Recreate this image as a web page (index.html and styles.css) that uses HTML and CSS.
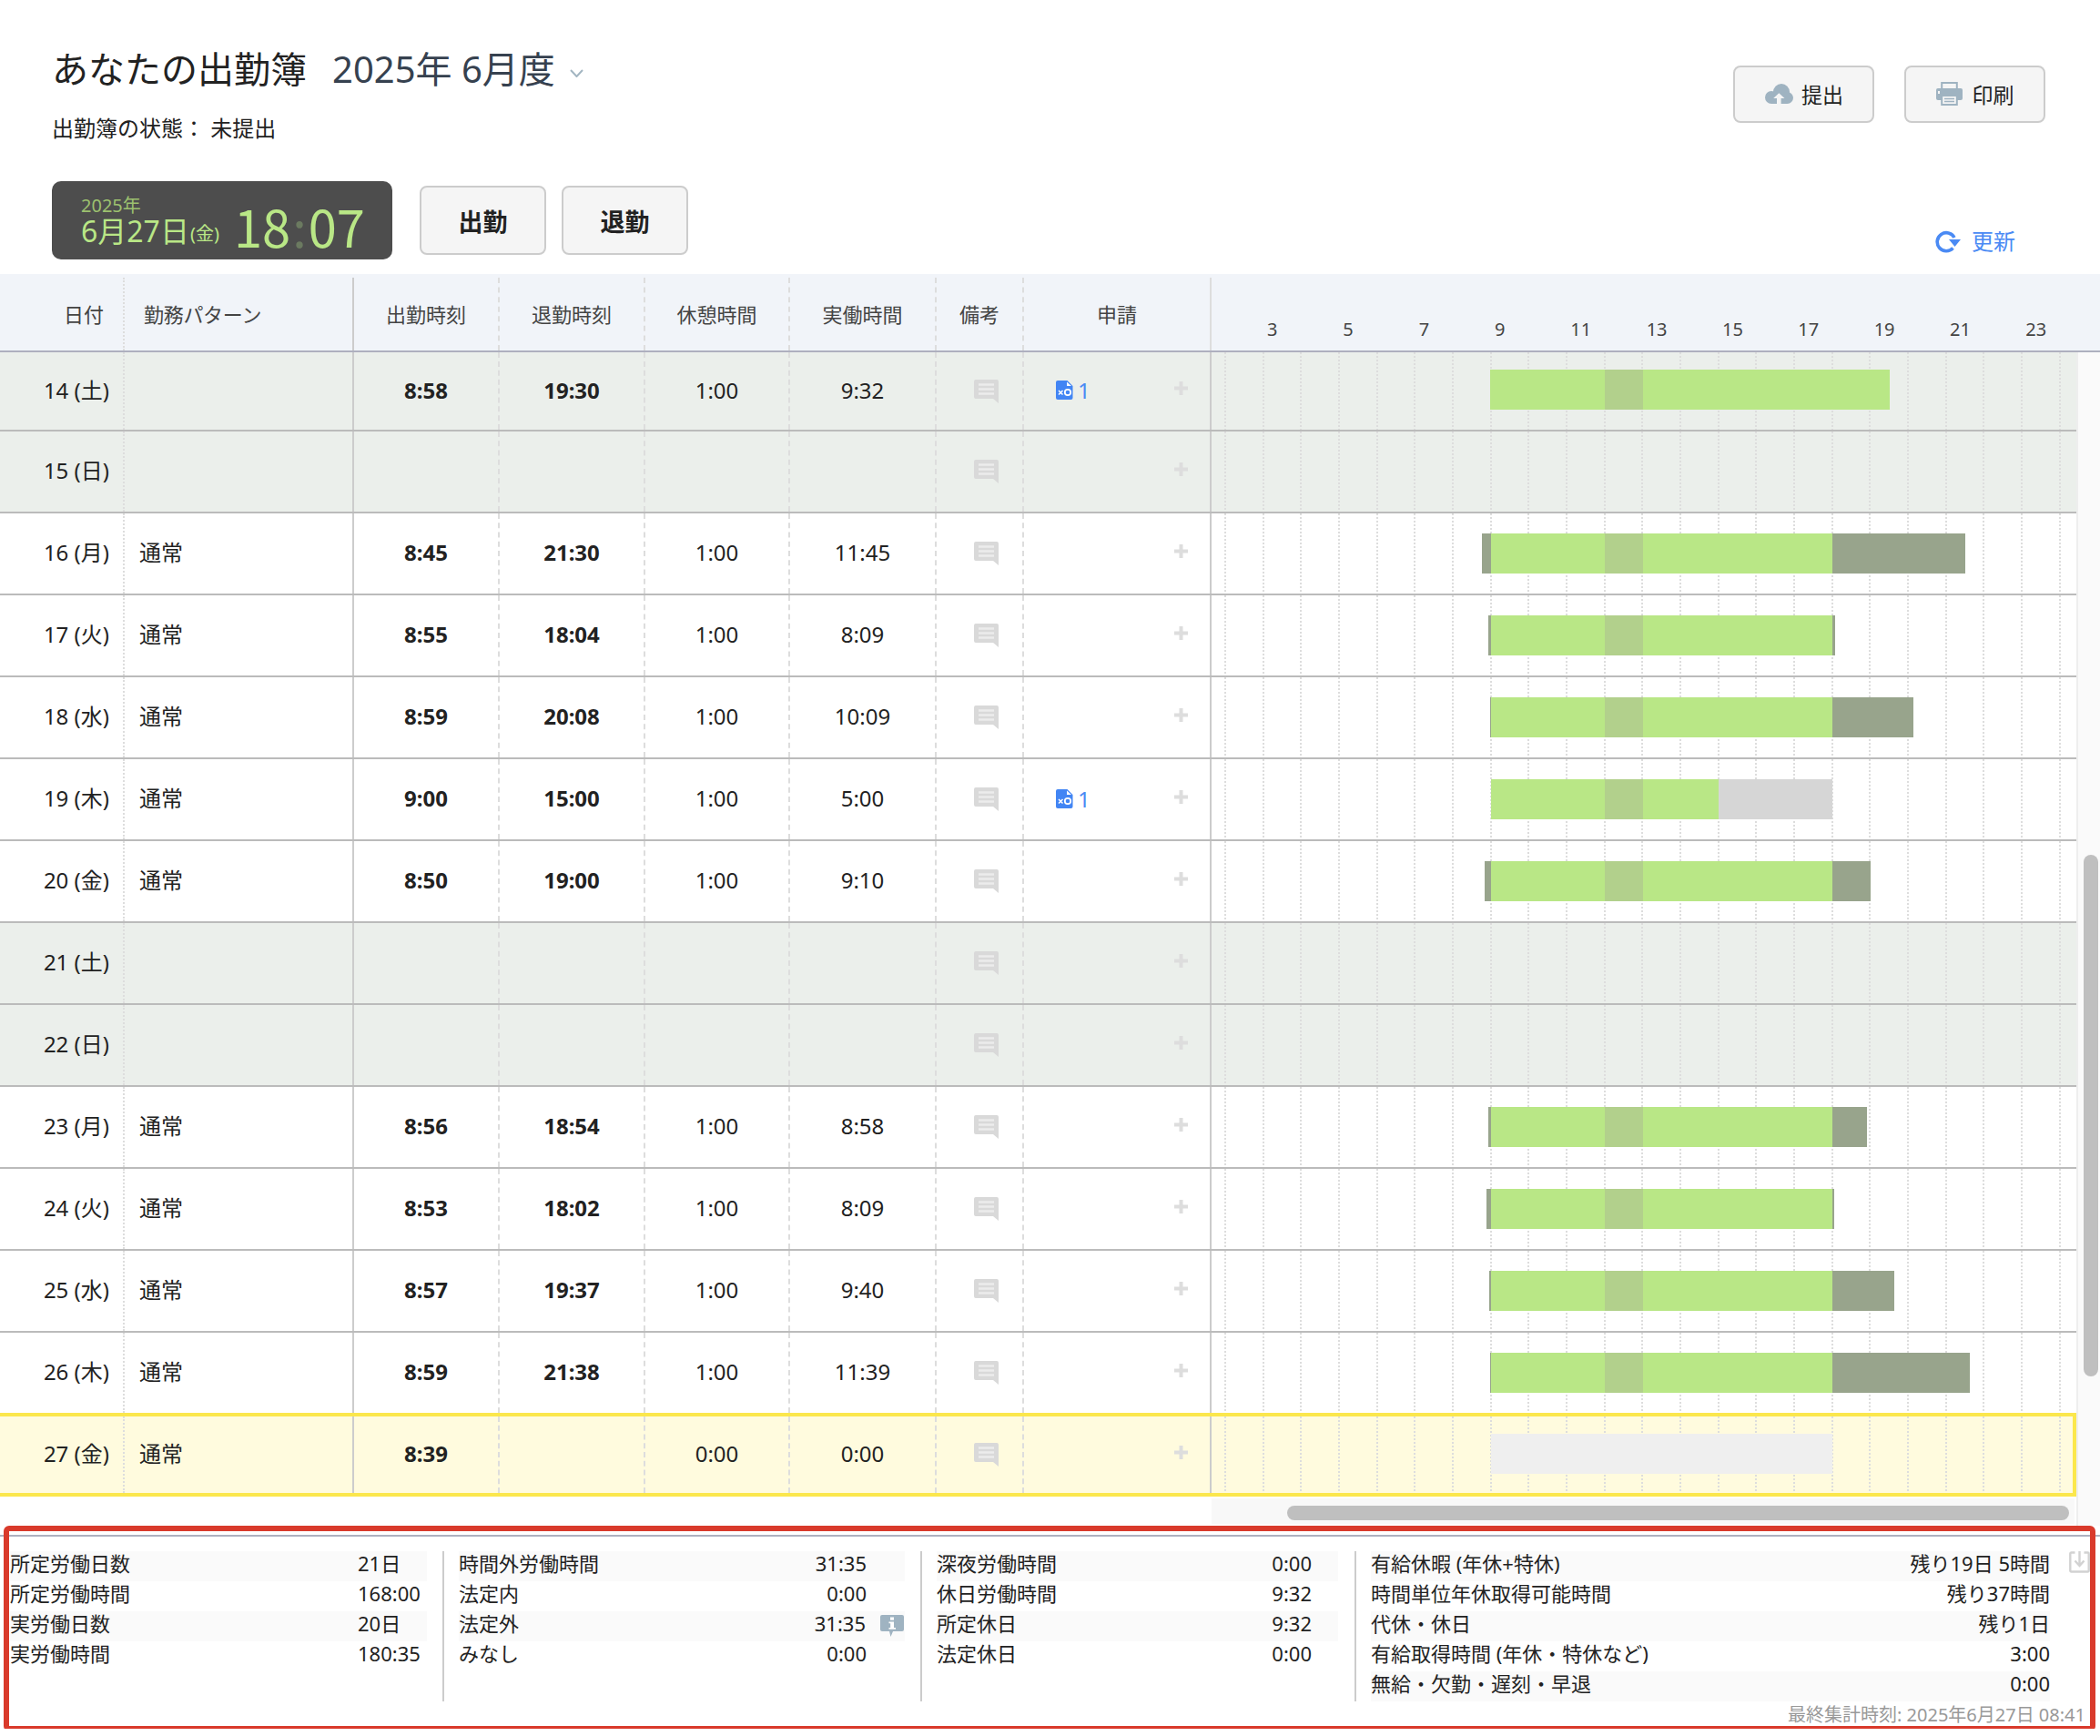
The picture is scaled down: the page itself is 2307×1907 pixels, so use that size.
FILE: index.html
```html
<!DOCTYPE html>
<html lang="ja">
<head>
    <meta charset="UTF-8">
    <title>あなたの出勤簿</title>
    <link rel="stylesheet" href="styles.css">
</head>
<body>
    <svg class="icon-defs" width="0" height="0" aria-hidden="true">
        <symbol id="iconNote" viewBox="0 0 27 26">
            <path d="M2 0H25A2 2 0 0 1 27 2V26L21 21H2A2 2 0 0 1 0 19V2A2 2 0 0 1 2 0Z" fill="#d9d9d9"/>
            <path d="M5 5.5H22M5 10.5H22M5 15.5H22" stroke="#ececec" stroke-width="2.6"/>
        </symbol>
        <symbol id="iconPlus" viewBox="0 0 17 17">
            <path d="M8.5 1V16M1 8.5H16" stroke="#dddddd" stroke-width="4"/>
        </symbol>
        <symbol id="iconFile" viewBox="0 0 19 21">
            <path d="M2 0H12.5L18.500 6V19A2 2 0 0 1 16.500 21H2A2 2 0 0 1 0 19V2A2 2 0 0 1 2 0Z" fill="#4285f4"/>
            <path d="M12 1.500L17 6H12Z" fill="#ffffff"/>
            <path d="M3 11L7.500 15.500M7.500 11L3 15.500" stroke="#ffffff" stroke-width="1.500"/>
            <circle cx="13" cy="13" r="3.200" fill="none" stroke="#ffffff" stroke-width="1.800"/>
        </symbol>
    </svg>

    <header class="page-head">
        <div class="head-top">
            <div class="head-title">
                <h1>あなたの出勤簿<span class="term">2025年 6月度</span>
                    <svg class="chevron" width="15" height="9" viewBox="0 0 15 9"><path d="M1 1L7.500 8L14 1" fill="none" stroke="#a3b6c2" stroke-width="2"/></svg>
                </h1>
                <p class="status">出勤簿の状態： 未提出</p>
            </div>
            <div class="head-actions">
                <button class="btn btn-small">
                    <svg width="32" height="22" viewBox="0 0 32 22">
                        <circle cx="8" cy="15" r="7" fill="#9fb3c1"/>
                        <circle cx="19" cy="9" r="9" fill="#9fb3c1"/>
                        <circle cx="25.500" cy="15.500" r="6.500" fill="#9fb3c1"/>
                        <rect x="8" y="13" width="17" height="9" fill="#9fb3c1"/>
                        <path d="M16.300 10.300L22.500 16H18.600V22H14V16H10.200Z" fill="#f5f5f5"/>
                    </svg>
                    提出
                </button>
                <button class="btn btn-small btn-print">
                    <svg width="29" height="26" viewBox="0 0 29 26">
                        <rect x="6.200" y="1" width="16.600" height="10" fill="none" stroke="#9fb3c1" stroke-width="2"/>
                        <rect x="0" y="7" width="29" height="13" rx="2" fill="#9fb3c1"/>
                        <rect x="2" y="10" width="2" height="3" fill="#f5f5f5"/>
                        <rect x="6.200" y="15" width="16.600" height="10" fill="#f5f5f5" stroke="#9fb3c1" stroke-width="2"/>
                        <path d="M9 18.500H20M9 21.500H20" stroke="#9fb3c1" stroke-width="1.500"/>
                    </svg>
                    印刷
                </button>
            </div>
        </div>
        <div class="head-bottom">
            <div class="clock">
                <div class="clock-date">
                    <div class="clock-year">2025年</div>
                    <div class="clock-day">6月27日<small>(金)</small></div>
                </div>
                <div class="clock-time">18<span class="clock-colon">:</span>07</div>
            </div>
            <button class="btn btn-punch">出勤</button>
            <button class="btn btn-punch">退勤</button>
            <a class="refresh">
                <svg width="28" height="25" viewBox="0 0 28 25">
                    <path d="M21 8A10 10 0 1 0 19.500 19.500" fill="none" stroke="#4a8af4" stroke-width="3.600"/>
                    <path d="M15 10H28L21.500 18Z" fill="#4a8af4"/>
                </svg>
                更新
            </a>
        </div>
    </header>

    <div class="thead grid-row">
        <div class="cell c-date">日付</div>
        <div class="cell c-pattern">勤務パターン</div>
        <div class="cell c-num">出勤時刻</div>
        <div class="cell c-num">退勤時刻</div>
        <div class="cell c-num">休憩時間</div>
        <div class="cell c-num">実働時間</div>
        <div class="cell c-center">備考</div>
        <div class="cell c-center c-last">申請</div>
        <div class="axis">
            <span>3</span><span>5</span><span>7</span><span>9</span><span>11</span><span>13</span><span>15</span><span>17</span><span>19</span><span>21</span><span>23</span>
        </div>
    </div>

    <div class="sheet">
        <div class="rows">
            <div class="grid-row row row-first off">
                <div class="cell c-date">14 (土)</div>
                <div class="cell c-pattern"></div>
                <div class="cell c-num"><b>8:58</b></div>
                <div class="cell c-num"><b>19:30</b></div>
                <div class="cell c-num">1:00</div>
                <div class="cell c-num">9:32</div>
                <div class="cell c-note"><svg width="27" height="26"><use href="#iconNote"/></svg></div>
                <div class="cell c-req c-last"><span class="req-link"><svg width="19" height="21"><use href="#iconFile"/></svg>1</span><svg class="plus" width="17" height="17"><use href="#iconPlus"/></svg></div>
                <div class="chart">
                    <div class="bar" style="margin-left:306px"><i class="work" style="width:126px"></i><i class="rest" style="width:42px"></i><i class="work" style="width:271px"></i></div>
                </div>
            </div>

            <div class="grid-row row off">
                <div class="cell c-date">15 (日)</div>
                <div class="cell c-pattern"></div>
                <div class="cell c-num"></div>
                <div class="cell c-num"></div>
                <div class="cell c-num"></div>
                <div class="cell c-num"></div>
                <div class="cell c-note"><svg width="27" height="26"><use href="#iconNote"/></svg></div>
                <div class="cell c-req c-last"><svg class="plus" width="17" height="17"><use href="#iconPlus"/></svg></div>
                <div class="chart"></div>
            </div>

            <div class="grid-row row">
                <div class="cell c-date">16 (月)</div>
                <div class="cell c-pattern">通常</div>
                <div class="cell c-num"><b>8:45</b></div>
                <div class="cell c-num"><b>21:30</b></div>
                <div class="cell c-num">1:00</div>
                <div class="cell c-num">11:45</div>
                <div class="cell c-note"><svg width="27" height="26"><use href="#iconNote"/></svg></div>
                <div class="cell c-req c-last"><svg class="plus" width="17" height="17"><use href="#iconPlus"/></svg></div>
                <div class="chart">
                    <div class="bar" style="margin-left:297px"><i class="over" style="width:10px"></i><i class="work" style="width:125px"></i><i class="rest" style="width:42px"></i><i class="work" style="width:208px"></i><i class="over" style="width:146px"></i></div>
                </div>
            </div>

            <div class="grid-row row">
                <div class="cell c-date">17 (火)</div>
                <div class="cell c-pattern">通常</div>
                <div class="cell c-num"><b>8:55</b></div>
                <div class="cell c-num"><b>18:04</b></div>
                <div class="cell c-num">1:00</div>
                <div class="cell c-num">8:09</div>
                <div class="cell c-note"><svg width="27" height="26"><use href="#iconNote"/></svg></div>
                <div class="cell c-req c-last"><svg class="plus" width="17" height="17"><use href="#iconPlus"/></svg></div>
                <div class="chart">
                    <div class="bar" style="margin-left:304px"><i class="over" style="width:3px"></i><i class="work" style="width:125px"></i><i class="rest" style="width:42px"></i><i class="work" style="width:208px"></i><i class="over" style="width:3px"></i></div>
                </div>
            </div>

            <div class="grid-row row">
                <div class="cell c-date">18 (水)</div>
                <div class="cell c-pattern">通常</div>
                <div class="cell c-num"><b>8:59</b></div>
                <div class="cell c-num"><b>20:08</b></div>
                <div class="cell c-num">1:00</div>
                <div class="cell c-num">10:09</div>
                <div class="cell c-note"><svg width="27" height="26"><use href="#iconNote"/></svg></div>
                <div class="cell c-req c-last"><svg class="plus" width="17" height="17"><use href="#iconPlus"/></svg></div>
                <div class="chart">
                    <div class="bar" style="margin-left:306px"><i class="over" style="width:1px"></i><i class="work" style="width:125px"></i><i class="rest" style="width:42px"></i><i class="work" style="width:208px"></i><i class="over" style="width:89px"></i></div>
                </div>
            </div>

            <div class="grid-row row">
                <div class="cell c-date">19 (木)</div>
                <div class="cell c-pattern">通常</div>
                <div class="cell c-num"><b>9:00</b></div>
                <div class="cell c-num"><b>15:00</b></div>
                <div class="cell c-num">1:00</div>
                <div class="cell c-num">5:00</div>
                <div class="cell c-note"><svg width="27" height="26"><use href="#iconNote"/></svg></div>
                <div class="cell c-req c-last"><span class="req-link"><svg width="19" height="21"><use href="#iconFile"/></svg>1</span><svg class="plus" width="17" height="17"><use href="#iconPlus"/></svg></div>
                <div class="chart">
                    <div class="bar" style="margin-left:307px"><i class="work" style="width:125px"></i><i class="rest" style="width:42px"></i><i class="work" style="width:83px"></i><i class="short" style="width:125px"></i></div>
                </div>
            </div>

            <div class="grid-row row">
                <div class="cell c-date">20 (金)</div>
                <div class="cell c-pattern">通常</div>
                <div class="cell c-num"><b>8:50</b></div>
                <div class="cell c-num"><b>19:00</b></div>
                <div class="cell c-num">1:00</div>
                <div class="cell c-num">9:10</div>
                <div class="cell c-note"><svg width="27" height="26"><use href="#iconNote"/></svg></div>
                <div class="cell c-req c-last"><svg class="plus" width="17" height="17"><use href="#iconPlus"/></svg></div>
                <div class="chart">
                    <div class="bar" style="margin-left:300px"><i class="over" style="width:7px"></i><i class="work" style="width:125px"></i><i class="rest" style="width:42px"></i><i class="work" style="width:208px"></i><i class="over" style="width:42px"></i></div>
                </div>
            </div>

            <div class="grid-row row off">
                <div class="cell c-date">21 (土)</div>
                <div class="cell c-pattern"></div>
                <div class="cell c-num"></div>
                <div class="cell c-num"></div>
                <div class="cell c-num"></div>
                <div class="cell c-num"></div>
                <div class="cell c-note"><svg width="27" height="26"><use href="#iconNote"/></svg></div>
                <div class="cell c-req c-last"><svg class="plus" width="17" height="17"><use href="#iconPlus"/></svg></div>
                <div class="chart"></div>
            </div>

            <div class="grid-row row off">
                <div class="cell c-date">22 (日)</div>
                <div class="cell c-pattern"></div>
                <div class="cell c-num"></div>
                <div class="cell c-num"></div>
                <div class="cell c-num"></div>
                <div class="cell c-num"></div>
                <div class="cell c-note"><svg width="27" height="26"><use href="#iconNote"/></svg></div>
                <div class="cell c-req c-last"><svg class="plus" width="17" height="17"><use href="#iconPlus"/></svg></div>
                <div class="chart"></div>
            </div>

            <div class="grid-row row">
                <div class="cell c-date">23 (月)</div>
                <div class="cell c-pattern">通常</div>
                <div class="cell c-num"><b>8:56</b></div>
                <div class="cell c-num"><b>18:54</b></div>
                <div class="cell c-num">1:00</div>
                <div class="cell c-num">8:58</div>
                <div class="cell c-note"><svg width="27" height="26"><use href="#iconNote"/></svg></div>
                <div class="cell c-req c-last"><svg class="plus" width="17" height="17"><use href="#iconPlus"/></svg></div>
                <div class="chart">
                    <div class="bar" style="margin-left:304px"><i class="over" style="width:3px"></i><i class="work" style="width:125px"></i><i class="rest" style="width:42px"></i><i class="work" style="width:208px"></i><i class="over" style="width:38px"></i></div>
                </div>
            </div>

            <div class="grid-row row">
                <div class="cell c-date">24 (火)</div>
                <div class="cell c-pattern">通常</div>
                <div class="cell c-num"><b>8:53</b></div>
                <div class="cell c-num"><b>18:02</b></div>
                <div class="cell c-num">1:00</div>
                <div class="cell c-num">8:09</div>
                <div class="cell c-note"><svg width="27" height="26"><use href="#iconNote"/></svg></div>
                <div class="cell c-req c-last"><svg class="plus" width="17" height="17"><use href="#iconPlus"/></svg></div>
                <div class="chart">
                    <div class="bar" style="margin-left:302px"><i class="over" style="width:5px"></i><i class="work" style="width:125px"></i><i class="rest" style="width:42px"></i><i class="work" style="width:208px"></i><i class="over" style="width:2px"></i></div>
                </div>
            </div>

            <div class="grid-row row">
                <div class="cell c-date">25 (水)</div>
                <div class="cell c-pattern">通常</div>
                <div class="cell c-num"><b>8:57</b></div>
                <div class="cell c-num"><b>19:37</b></div>
                <div class="cell c-num">1:00</div>
                <div class="cell c-num">9:40</div>
                <div class="cell c-note"><svg width="27" height="26"><use href="#iconNote"/></svg></div>
                <div class="cell c-req c-last"><svg class="plus" width="17" height="17"><use href="#iconPlus"/></svg></div>
                <div class="chart">
                    <div class="bar" style="margin-left:305px"><i class="over" style="width:2px"></i><i class="work" style="width:125px"></i><i class="rest" style="width:42px"></i><i class="work" style="width:208px"></i><i class="over" style="width:68px"></i></div>
                </div>
            </div>

            <div class="grid-row row row-before-today">
                <div class="cell c-date">26 (木)</div>
                <div class="cell c-pattern">通常</div>
                <div class="cell c-num"><b>8:59</b></div>
                <div class="cell c-num"><b>21:38</b></div>
                <div class="cell c-num">1:00</div>
                <div class="cell c-num">11:39</div>
                <div class="cell c-note"><svg width="27" height="26"><use href="#iconNote"/></svg></div>
                <div class="cell c-req c-last"><svg class="plus" width="17" height="17"><use href="#iconPlus"/></svg></div>
                <div class="chart">
                    <div class="bar" style="margin-left:306px"><i class="over" style="width:1px"></i><i class="work" style="width:125px"></i><i class="rest" style="width:42px"></i><i class="work" style="width:208px"></i><i class="over" style="width:151px"></i></div>
                </div>
            </div>

            <div class="grid-row row today">
                <div class="cell c-date">27 (金)</div>
                <div class="cell c-pattern">通常</div>
                <div class="cell c-num"><b>8:39</b></div>
                <div class="cell c-num"></div>
                <div class="cell c-num">0:00</div>
                <div class="cell c-num">0:00</div>
                <div class="cell c-note"><svg width="27" height="26"><use href="#iconNote"/></svg></div>
                <div class="cell c-req c-last"><svg class="plus" width="17" height="17"><use href="#iconPlus"/></svg></div>
                <div class="chart">
                    <div class="bar" style="margin-left:307px"><i class="planned" style="width:375px"></i></div>
                </div>
            </div>

            <div class="hscroll">
                <div class="hscroll-track"><div class="hscroll-thumb"></div></div>
            </div>
        </div>
        <div class="vscroll"><div class="vscroll-thumb"></div></div>
    </div>

    <section class="summary">
        <div class="stats">
            <div class="stat-col stat-a">
                <div class="stat"><span>所定労働日数</span><span class="stat-left">21日</span></div>
                <div class="stat"><span>所定労働時間</span><span class="stat-left">168:00</span></div>
                <div class="stat"><span>実労働日数</span><span class="stat-left">20日</span></div>
                <div class="stat"><span>実労働時間</span><span class="stat-left">180:35</span></div>
            </div>
            <div class="stat-col stat-b">
                <div class="stat"><span>時間外労働時間</span><span>31:35</span></div>
                <div class="stat"><span>法定内</span><span>0:00</span></div>
                <div class="stat stat-info">
                    <span>法定外</span>
                    <span class="stat-value">31:35
                        <svg width="26" height="24" viewBox="0 0 26 24">
                            <path d="M2 0H24A2 2 0 0 1 26 2V16A2 2 0 0 1 24 18H14L11.500 24L10 18H2A2 2 0 0 1 0 16V2A2 2 0 0 1 2 0Z" fill="#9fb3c1"/>
                            <rect x="11" y="2.500" width="4" height="3.200" fill="#ffffff"/>
                            <path d="M9.500 7.500H15V14H17V15.800H9.500V14H11.200V9.300H9.500Z" fill="#ffffff"/>
                        </svg>
                    </span>
                </div>
                <div class="stat"><span>みなし</span><span>0:00</span></div>
            </div>
            <div class="stat-col stat-c">
                <div class="stat"><span>深夜労働時間</span><span>0:00</span></div>
                <div class="stat"><span>休日労働時間</span><span>9:32</span></div>
                <div class="stat"><span>所定休日</span><span>9:32</span></div>
                <div class="stat"><span>法定休日</span><span>0:00</span></div>
            </div>
            <div class="stat-col stat-d">
                <div class="stat"><span>有給休暇 (年休+特休)</span><span>残り19日 5時間</span></div>
                <div class="stat"><span>時間単位年休取得可能時間</span><span>残り37時間</span></div>
                <div class="stat"><span>代休・休日</span><span>残り1日</span></div>
                <div class="stat"><span>有給取得時間 (年休・特休など)</span><span>3:00</span></div>
                <div class="stat"><span>無給・欠勤・遅刻・早退</span><span>0:00</span></div>
            </div>
            <svg class="export" width="23" height="24" viewBox="0 0 23 24">
                <path d="M6.500 1.500H2.500A1.200 1.200 0 0 0 1.300 2.700V21.300A1.200 1.200 0 0 0 2.500 22.500H20.500A1.200 1.200 0 0 0 21.700 21.300V2.700A1.200 1.200 0 0 0 20.500 1.500H16.500" fill="none" stroke="#d2d2d2" stroke-width="2.400"/>
                <path d="M11.500 0V15M6.500 10.500L11.500 16L16.500 10.500" fill="none" stroke="#d2d2d2" stroke-width="2.400"/>
            </svg>
        </div>
        <p class="updated">最終集計時刻: 2025年6月27日 08:41</p>
    </section>

    <div class="callout"></div>
</body>
</html>
```

FILE: styles.css
```css
* {
    box-sizing: border-box;
}

body {
    margin: 0;
    position: relative;
    background-color: #ffffff;
    color: #222222;
    font-family: "Noto Sans", "Noto Sans CJK JP", sans-serif;
    font-size: 24px;
    overflow: hidden;
}

.icon-defs {
    position: absolute;
}

/* page head */

.page-head {
    height: 301px;
}

.head-top {
    display: flex;
    justify-content: space-between;
    align-items: flex-start;
    padding: 49px 60px 0 57px;
    height: 158px;
}

h1 {
    margin: 0;
    font-size: 40px;
    font-weight: 400;
    line-height: 54px;
    color: #222222;
}

.term {
    margin-left: 28px;
    color: #36414f;
}

.chevron {
    margin-left: 6px;
    vertical-align: 6px;
}

.status {
    margin: 21px 0 0;
    font-size: 24px;
    line-height: 34px;
}

.head-actions {
    display: flex;
    gap: 33px;
    margin-top: 23px;
}

.btn {
    display: flex;
    align-items: center;
    justify-content: center;
    border: 2px solid #cccccc;
    border-radius: 8px;
    background-color: #f5f5f5;
    color: #222222;
    font-family: inherit;
}

.btn-small {
    gap: 9px;
    width: 155px;
    height: 63px;
    padding-bottom: 2px;
    font-size: 23px;
}

.btn-print {
    gap: 11px;
}

.head-bottom {
    display: flex;
    align-items: center;
    padding: 0 93px 0 57px;
    margin-top: 41px;
    height: 86px;
}

.clock {
    display: flex;
    align-items: flex-end;
    width: 374px;
    height: 86px;
    padding: 0 0 11px 32px;
    margin-right: 30px;
    border-radius: 10px;
    background-color: #4d4d4d;
    color: #b9e786;
}

.clock-date {
    width: 168px;
}

.clock-year {
    font-size: 20px;
    line-height: 20px;
    color: #9cc06f;
}

.clock-day {
    font-size: 32px;
    line-height: 35px;
    white-space: nowrap;
}

.clock-day small {
    font-size: 20px;
    margin-left: 1px;
    vertical-align: 2px;
}

.clock-time {
    font-family: "Noto Sans CJK JP", sans-serif;
    font-weight: 400;
    font-size: 56px;
    line-height: 52px;
    white-space: nowrap;
}

.clock-colon {
    color: #6b7a60;
    margin: 0 2px;
}

.btn-punch {
    width: 139px;
    height: 76px;
    margin-right: 17px;
    font-size: 27px;
    font-weight: 700;
}

.refresh {
    display: flex;
    align-items: center;
    gap: 12px;
    align-self: flex-end;
    margin: 0 0 3px auto;
    color: #4a8af4;
    font-size: 24px;
    line-height: 34px;
}

/* table */

.grid-row {
    display: grid;
    grid-template-columns: 137px 252px 160px 160px 159px 161px 96px 206px 1fr;
}

.cell {
    display: flex;
    align-items: center;
    border-right: 2px dashed #dddddd;
}

.c-date {
    justify-content: flex-end;
    padding-right: 15px;
    border-right: 2px dotted #dddddd;
}

.c-pattern {
    padding-left: 16px;
    border-right: 2px solid #cccccc;
}

.c-num {
    justify-content: center;
}

.row .c-date,
.row .c-pattern {
    padding-bottom: 5px;
}

.row .c-num {
    padding-bottom: 3px;
}

.c-center {
    justify-content: center;
}

.c-last {
    border-right: 2px solid #cccccc;
}

.c-note {
    padding-left: 41px;
}

.c-req {
    justify-content: space-between;
    padding: 0 23px 0 35px;
}

.req-link {
    display: flex;
    align-items: center;
    gap: 5px;
    padding-bottom: 2px;
    color: #4a8af4;
}

.plus {
    margin: 0 0 6px auto;
}

.thead {
    height: 86px;
    padding-top: 4px;
    border-bottom: 2px solid #aeb0bf;
    background-color: #f1f4f9;
    color: #444444;
    font-size: 22px;
}

.thead .cell {
    padding-bottom: 3px;
}

.thead .c-date {
    padding-right: 21px;
}

.thead .c-pattern {
    padding-left: 21px;
    letter-spacing: -0.3px;
}

.thead .c-last {
    border-right-color: #dddddd;
}

.axis {
    display: flex;
    align-items: flex-end;
    padding: 0 0 9px 61px;
    font-size: 20px;
    line-height: 28px;
}

.axis span {
    width: 83.33px;
    flex: none;
}

.sheet {
    display: flex;
}

.rows {
    width: 2281px;
    flex: none;
}

.row {
    height: 90px;
    border-bottom: 2px solid #bbbbbb;
}

.row-first {
    height: 87px;
}

.row.off {
    background-color: #ebefeb;
}

.row-before-today {
    height: 88px;
    border-bottom: none;
}

.row.today {
    height: 92px;
    border-top: 4px solid #fbe74c;
    border-bottom: 4px solid #fbe74c;
    border-right: 4px solid #fbe74c;
    background-color: #fffbde;
}

.chart {
    position: relative;
    display: flex;
    align-items: flex-end;
    padding-bottom: 22px;
}

.today .chart {
    padding-bottom: 21px;
}

/* hour lines, dotted */
.chart::before {
    content: "";
    position: absolute;
    inset: 0;
    background-image: repeating-linear-gradient(to right, transparent 0, transparent 14px, #dddddd 14px, #dddddd 16px, transparent 16px, transparent 41.67px);
    -webkit-mask-image: repeating-linear-gradient(to bottom, #000 0, #000 2px, transparent 2px, transparent 4px);
    mask-image: repeating-linear-gradient(to bottom, #000 0, #000 2px, transparent 2px, transparent 4px);
}

.bar {
    position: relative;
    display: flex;
    height: 44px;
}

.bar i {
    display: block;
    height: 100%;
}

.work {
    background-color: #b9e786;
}

.rest {
    background-color: #b2d08c;
}

.over {
    background-color: #98a48c;
}

.short {
    background-color: #d6d6d6;
}

.planned {
    background-color: #efefef;
}

.hscroll {
    height: 32px;
    padding: 2px 2px 2px 1331px;
}

.hscroll-track {
    height: 28px;
    padding: 8px 6px 4px 83px;
    background-color: #f8f8f8;
}

.hscroll-thumb {
    height: 16px;
    border-radius: 8px;
    background-color: #bfbfbf;
}

.vscroll {
    flex: 1;
    padding: 552px 2px 0 6px;
    border-left: 2px solid #eeeeee;
    background-color: #fafafa;
}

.vscroll-thumb {
    height: 573px;
    border-radius: 8px;
    background-color: #bfbfbf;
}

/* summary */

.summary {
    margin-top: 10px;
    padding: 16px 0 0 11px;
    border-top: 2px solid #aeb0bf;
    font-size: 22px;
}

.stats {
    display: flex;
}

.stat-col {
    flex: none;
    padding-left: 16px;
    padding-right: 17px;
    border-left: 2px solid #cccccc;
}

.stat {
    display: flex;
    justify-content: space-between;
    align-items: center;
    height: 33px;
    padding-bottom: 6px;
    line-height: 27px;
}

.stat:nth-child(odd) {
    background-color: #fafafa;
}

.stat-left {
    width: 70px;
}

.stat-a {
    width: 475px;
    padding-left: 0;
    border-left: none;
}

.stat-a .stat {
    padding-right: 6px;
}

.stat-b {
    width: 525px;
}

.stat-b .stat {
    padding-right: 42px;
}

.stat-b .stat-info {
    padding-right: 1px;
}

.stat-value {
    display: flex;
    align-items: center;
    gap: 16px;
}

.stat-value svg {
    margin-top: 4px;
}

.stat-c {
    width: 477px;
    padding-right: 18px;
}

.stat-c .stat {
    padding-right: 29px;
}

.stat-d {
    width: 764px;
    height: 165px;
    padding-right: 0;
}

.export {
    flex: none;
    margin-left: 21px;
}

.updated {
    margin: 0;
    padding-right: 16px;
    color: #999999;
    font-size: 20px;
    line-height: 30px;
    text-align: right;
}

/* red box around the summary */
.callout {
    position: absolute;
    left: 4px;
    top: 1676px;
    width: 2298px;
    height: 226px;
    border: 6px solid #d93a2b;
    border-radius: 6px;
}
```
